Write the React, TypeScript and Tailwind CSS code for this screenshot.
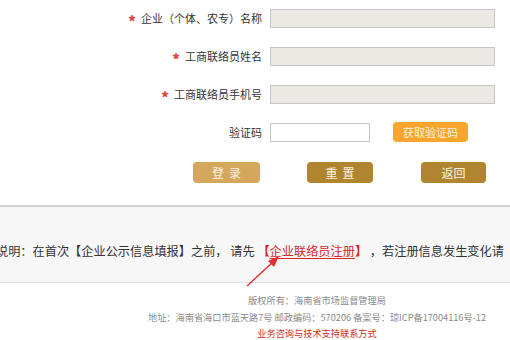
import React from "react";

const font = { fontFamily: '"Noto Sans CJK SC", "Microsoft YaHei", sans-serif' };

function Label({ text, star }: { text: string; star?: boolean }) {
  return (
    <div className="w-[262px] flex justify-end items-center text-[11px] text-[#333] leading-none whitespace-nowrap">
      {star && <span className="text-[#e23a3a] text-[16px] font-bold mr-[5px] leading-none translate-y-[2px]">*</span>}
      <span>{text}</span>
    </div>
  );
}

export default function App() {
  return (
    <div className="w-[510px] h-[340px] overflow-hidden bg-white relative" style={font}>
      <div className="pt-[9px] flex flex-col">
        <div className="flex items-center h-[19px]">
          <Label text="企业（个体、农专）名称" star />
          <div className="ml-[8px] w-[225px] h-[19px] bg-[#ebe9e3] border border-[#c6c6c6]" />
        </div>
        <div className="flex items-center h-[19px] mt-[19px]">
          <Label text="工商联络员姓名" star />
          <div className="ml-[8px] w-[225px] h-[19px] bg-[#ebe9e3] border border-[#c6c6c6]" />
        </div>
        <div className="flex items-center h-[19px] mt-[19px]">
          <Label text="工商联络员手机号" star />
          <div className="ml-[8px] w-[225px] h-[19px] bg-[#ebe9e3] border border-[#c6c6c6]" />
        </div>
        <div className="flex items-center h-[20px] mt-[18px]">
          <Label text="验证码" />
          <div className="ml-[8px] w-[100px] h-[19px] bg-white border border-[#c6c6c6]" />
          <div className="ml-[23px] w-[75px] h-[20px] rounded-[4px] bg-[#f7a52e] text-[#fff3dc] text-[11px] flex items-center justify-center leading-none">
            获取验证码
          </div>
        </div>
        <div className="flex items-center h-[21px] mt-[20px]">
          <div className="ml-[193px] w-[67px] h-[21px] rounded-[4px] bg-[#d4a75c] text-[#fbf3e3] text-[12px] flex items-center justify-center leading-none tracking-[5px] pl-[5px]">
            登录
          </div>
          <div className="ml-[47px] w-[66px] h-[21px] rounded-[4px] bg-[#b1852f] text-[#fbf3e3] text-[12px] flex items-center justify-center leading-none tracking-[5px] pl-[5px]">
            重置
          </div>
          <div className="ml-[48px] w-[65px] h-[21px] rounded-[4px] bg-[#b1852f] text-[#fbf3e3] text-[12px] flex items-center justify-center leading-none">
            返回
          </div>
        </div>
      </div>

      <div className="mt-[22px] h-[78px] bg-[#f7f7f7] border-t-[2px] border-t-[#d2d2d2] border-b border-b-[#dedede] overflow-hidden pt-[38px]">
        <div className="ml-[-4px] whitespace-nowrap text-[12.2px] text-[#333] leading-none">
          说明：在首次【企业公示信息填报】之前， 请先 <span className="text-[#e02020] font-bold">【</span>
          <span className="text-[#d9262c] underline underline-offset-[2px]">企业联络员注册</span>
          <span className="text-[#e02020] font-bold">】</span> ，若注册信息发生变化请
        </div>
      </div>

      <svg className="absolute left-0 top-0 pointer-events-none" width="510" height="340">
        <line x1="247" y1="286" x2="274" y2="261" stroke="#e23030" strokeWidth="1.5" />
        <polygon points="279,256 268,261 274,267" fill="#e23030" />
      </svg>

      <div className="pl-[124px] flex flex-col items-center text-[9.2px] leading-none">
        <div className="mt-[13px] text-[#8a8a8a]">版权所有：海南省市场监督管理局</div>
        <div className="mt-[8px] text-[#8a8a8a]">地址：海南省海口市蓝天路7号 邮政编码：570206 备案号：琼ICP备17004116号-12</div>
        <div className="mt-[7px] text-[#d22a2a]">业务咨询与技术支持联系方式</div>
      </div>
    </div>
  );
}
